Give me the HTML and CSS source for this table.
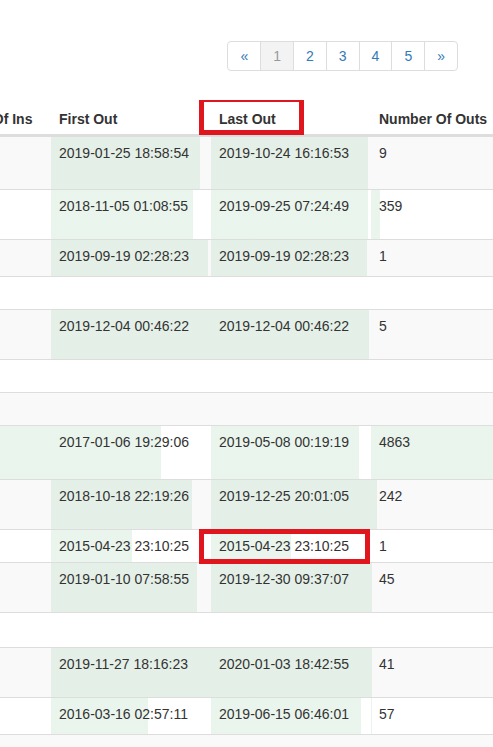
FILE: index.html
```html
<!DOCTYPE html>
<html lang="en">
<head>
<meta charset="utf-8">
<title>Outs report</title>
<link rel="stylesheet" href="styles.css">
</head>
<body>
<div class="page">
  <nav class="pager">
    <ul class="pagination">
      <li><a href="#">&laquo;</a></li>
      <li class="current"><span>1</span></li>
      <li><a href="#">2</a></li>
      <li><a href="#">3</a></li>
      <li><a href="#">4</a></li>
      <li><a href="#">5</a></li>
      <li><a href="#">&raquo;</a></li>
    </ul>
  </nav>
  <div class="table-wrap">
    <table class="data">
      <colgroup>
        <col class="c-ins"><col class="c-date"><col class="c-date"><col class="c-outs">
      </colgroup>
      <thead>
        <tr><th>Number Of Ins</th><th>First Out</th><th class="marked-head">Last Out</th><th>Number Of Outs</th></tr>
      </thead>
      <tbody>
        <tr class="h53"><td></td><td class="bar" style="--w:149px">2019-01-25 18:58:54</td><td class="bar" style="--w:157px">2019-10-24 16:16:53</td><td>9</td></tr>
        <tr class="h50"><td></td><td class="bar" style="--w:142px">2018-11-05 01:08:55</td><td class="bar" style="--w:157px">2019-09-25 07:24:49</td><td class="bar" style="--w:9px">359</td></tr>
        <tr class="h37"><td></td><td class="bar" style="--w:157px">2019-09-19 02:28:23</td><td class="bar" style="--w:156px">2019-09-19 02:28:23</td><td>1</td></tr>
        <tr class="h33"><td></td><td></td><td></td><td></td></tr>
        <tr class="h50"><td></td><td class="bar" style="--w:160px">2019-12-04 00:46:22</td><td class="bar" style="--w:158px">2019-12-04 00:46:22</td><td>5</td></tr>
        <tr class="h33"><td></td><td></td><td></td><td></td></tr>
        <tr class="h33"><td></td><td></td><td></td><td></td></tr>
        <tr class="h54"><td class="bar" style="--w:123px"></td><td class="bar" style="--w:110px">2017-01-06 19:29:06</td><td class="bar" style="--w:148px">2019-05-08 00:19:19</td><td class="bar" style="--w:122px">4863</td></tr>
        <tr class="h50"><td></td><td class="bar" style="--w:141px">2018-10-18 22:19:26</td><td class="bar" style="--w:160px">2019-12-25 20:01:05</td><td class="bar" style="--w:6px">242</td></tr>
        <tr class="h33"><td></td><td class="bar" style="--w:81px">2015-04-23 23:10:25</td><td class="bar marked-cell" style="--w:80px">2015-04-23 23:10:25</td><td>1</td></tr>
        <tr class="h50"><td></td><td class="bar" style="--w:146px">2019-01-10 07:58:55</td><td class="bar" style="--w:160px">2019-12-30 09:37:07</td><td class="bar" style="--w:1px">45</td></tr>
        <tr class="h35"><td></td><td></td><td></td><td></td></tr>
        <tr class="h50"><td></td><td class="bar" style="--w:160px">2019-11-27 18:16:23</td><td class="bar" style="--w:160px">2020-01-03 18:42:55</td><td class="bar" style="--w:1px">41</td></tr>
        <tr class="h37"><td></td><td class="bar" style="--w:97px">2016-03-16 02:57:11</td><td class="bar" style="--w:150px">2019-06-15 06:46:01</td><td class="bar" style="--w:1px">57</td></tr>
        <tr class="h50"><td></td><td></td><td></td><td></td></tr>
      </tbody>
    </table>
  </div>
</div>
</body>
</html>
```
FILE: styles.css
```css
html, body {
  margin: 0;
  padding: 0;
  background: #fff;
}

body {
  font-family: "Liberation Sans", Arial, sans-serif;
  font-size: 14px;
  line-height: 20px;
  color: #333;
}

.page {
  width: 493px;
  overflow: hidden;
}

.pager {
  display: flex;
  justify-content: flex-end;
  padding: 41px 35px 0 0;
}

.pagination {
  display: flex;
  margin: 0;
  padding: 0;
  list-style: none;
}

.pagination li > a,
.pagination li > span {
  display: block;
  padding: 4px 12px;
  line-height: 20px;
  border: 1px solid #ddd;
  margin-left: -1px;
  color: #337ab7;
  text-decoration: none;
  background: #fff;
}

.pagination li:first-child > a {
  margin-left: 0;
  border-radius: 4px 0 0 4px;
}

.pagination li:last-child > a {
  border-radius: 0 4px 4px 0;
}

.pagination li.current > span {
  background: #f3f3f3;
  color: #999;
}

.table-wrap {
  margin-top: 29px;
  overflow: hidden;
}

.data {
  table-layout: fixed;
  border-collapse: separate;
  border-spacing: 0;
  width: 565px;
  margin-left: -72px;
}

.c-ins { width: 123px; }
.c-date { width: 160px; }
.c-outs { width: 122px; }

.data th {
  text-align: left;
  vertical-align: bottom;
  font-weight: bold;
  padding: 9px 8px 5px;
  border-bottom: 2px solid #ddd;
  white-space: nowrap;
}

.data td {
  vertical-align: top;
  padding: 6px 8px 0;
  border-top: 1px solid #ddd;
  white-space: nowrap;
}

.data tbody tr:nth-child(odd) {
  background: #f9f9f9;
}

.data td.bar {
  background: linear-gradient(to right, rgba(45, 155, 75, 0.1) var(--w), transparent var(--w));
}

.h33 { height: 33px; }
.h35 { height: 35px; }
.h37 { height: 37px; }
.h50 { height: 50px; }
.h53 { height: 53px; }
.h54 { height: 54px; }

.marked-head,
.marked-cell {
  position: relative;
}

.marked-head::after,
.marked-cell::after {
  content: "";
  position: absolute;
  box-sizing: border-box;
  border: 5px solid #e0161f;
  left: -12px;
}

.marked-head::after {
  top: -3px;
  width: 105px;
  height: 38px;
}

.marked-cell::after {
  top: -1px;
  width: 171px;
  height: 35px;
}
```
